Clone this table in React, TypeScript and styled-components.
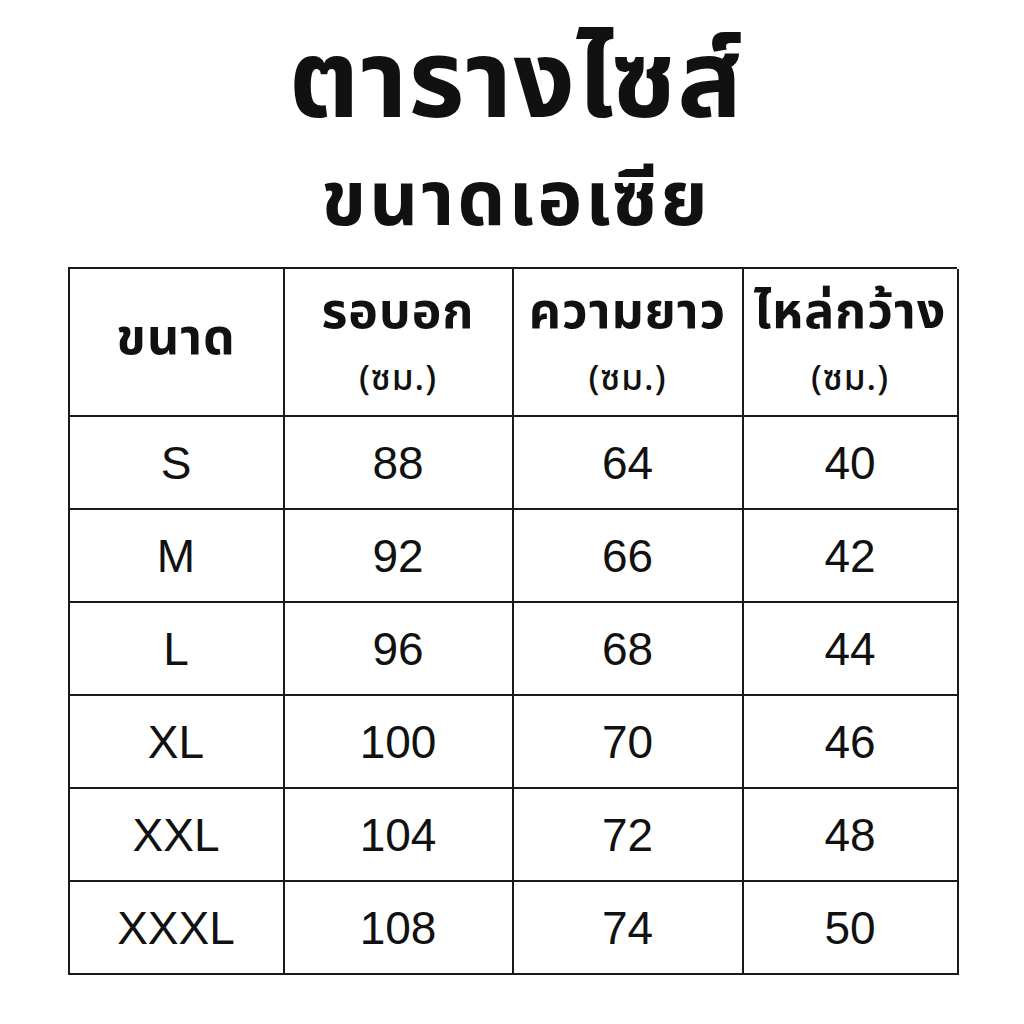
import React from 'react';
import styled, { createGlobalStyle } from 'styled-components';

const GlobalStyle = createGlobalStyle`
  html, body {
    margin: 0;
    padding: 0;
    background: #ffffff;
  }
  body {
    font-family: 'Noto Sans Thai', 'Noto Sans', 'Liberation Sans', sans-serif;
    color: #111;
  }
`;

type SizeRow = {
  size: string;
  chest: number;
  length: number;
  shoulder: number;
};

const rows: SizeRow[] = [
  { size: 'S', chest: 88, length: 64, shoulder: 40 },
  { size: 'M', chest: 92, length: 66, shoulder: 42 },
  { size: 'L', chest: 96, length: 68, shoulder: 44 },
  { size: 'XL', chest: 100, length: 70, shoulder: 46 },
  { size: 'XXL', chest: 104, length: 72, shoulder: 48 },
  { size: 'XXXL', chest: 108, length: 74, shoulder: 50 },
];

const Page = styled.div`
  width: 1024px;
  height: 1024px;
  display: flex;
  flex-direction: column;
  align-items: center;
  box-sizing: border-box;
  padding-top: 24px;
  padding-left: 8px;
`;

const Title = styled.h1`
  margin: 0;
  font-size: 108px;
  font-weight: 700;
  line-height: 120px;
  letter-spacing: 1px;
`;

const SubTitle = styled.h2`
  margin: 8px 0 0;
  font-size: 76px;
  font-weight: 700;
  line-height: 100px;
  letter-spacing: 3px;
`;

const Table = styled.div`
  margin-top: 15px;
  margin-left: -8px;
  width: 889px;
  display: grid;
  grid-template-columns: 215px 229px 230px 215px;
  grid-template-rows: 148px repeat(6, 93px);
  border-top: 2px solid #1a1a1a;
  border-left: 2px solid #1a1a1a;
  box-sizing: border-box;
`;

const Cell = styled.div`
  display: flex;
  flex-direction: column;
  align-items: center;
  justify-content: center;
  border-right: 2px solid #1a1a1a;
  border-bottom: 2px solid #1a1a1a;
`;

const HeadLabel = styled.div<{ $single?: boolean }>`
  font-size: 50px;
  font-weight: 700;
  line-height: 58px;
  letter-spacing: 1px;
  margin-top: ${p => (p.$single ? '-6px' : '0')};
`;

const Unit = styled.div`
  margin-top: 18px;
  font-size: 35px;
  font-weight: 500;
  line-height: 40px;
  letter-spacing: 1px;
`;

const Value = styled.div`
  font-family: 'Liberation Sans', Arial, sans-serif;
  font-size: 46px;
  line-height: 52px;
  color: #111;
`;

const Header: React.FC<{ label: string; unit?: boolean }> = ({ label, unit }) => (
  <Cell>
    <HeadLabel $single={!unit}>{label}</HeadLabel>
    {unit && <Unit>(ซม.)</Unit>}
  </Cell>
);

export default function App() {
  return (
    <>
      <GlobalStyle />
      <Page>
        <Title>ตารางไซส์</Title>
        <SubTitle>ขนาดเอเซีย</SubTitle>
        <Table>
          <Header label="ขนาด" />
          <Header label="รอบอก" unit />
          <Header label="ความยาว" unit />
          <Header label="ไหล่กว้าง" unit />
          {rows.map(r => (
            <React.Fragment key={r.size}>
              <Cell><Value>{r.size}</Value></Cell>
              <Cell><Value>{r.chest}</Value></Cell>
              <Cell><Value>{r.length}</Value></Cell>
              <Cell><Value>{r.shoulder}</Value></Cell>
            </React.Fragment>
          ))}
        </Table>
      </Page>
    </>
  );
}
